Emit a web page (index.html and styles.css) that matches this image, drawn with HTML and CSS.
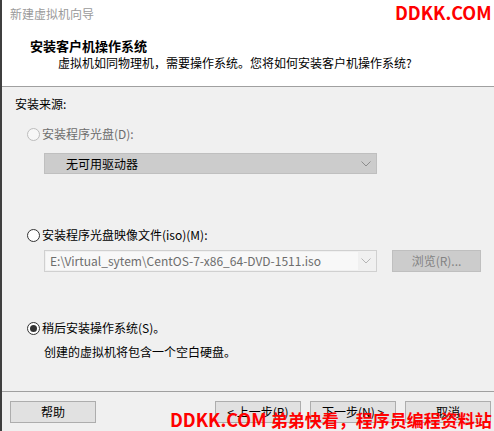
FILE: index.html
```html
<!DOCTYPE html>
<html lang="zh-CN">
<head>
<meta charset="utf-8">
<title>新建虚拟机向导</title>
<link rel="stylesheet" href="styles.css">
</head>
<body>
<div class="window">
  <header class="header">
    <div class="win-title">新建虚拟机向导</div>
    <div class="heading">安装客户机操作系统</div>
    <div class="subtitle">虚拟机如同物理机，需要操作系统。您将如何安装客户机操作系统?</div>
  </header>
  <main class="content">
    <div class="section-label">安装来源:</div>

    <label class="radio-row disabled r1"><span class="radio"></span><span>安装程序光盘(D):</span></label>
    <div class="select disabled-select">
      <span class="select-text">无可用驱动器</span>
      <svg class="chev" width="10" height="6" viewBox="0 0 10 6"><path d="M0.5 0.5 L5 5 L9.5 0.5" fill="none" stroke="#8c8c8c" stroke-width="1"/></svg>
    </div>

    <label class="radio-row r2"><span class="radio"></span><span>安装程序光盘映像文件(iso)(M):</span></label>
    <div class="iso-row">
      <div class="combo">
        <span class="combo-field">E:\Virtual_sytem\CentOS-7-x86_64-DVD-1511.iso</span>
        <svg class="chev" width="10" height="6" viewBox="0 0 10 6"><path d="M0.5 0.5 L5 5 L9.5 0.5" fill="none" stroke="#b4b4b4" stroke-width="1"/></svg>
      </div>
      <div class="browse">浏览(R)...</div>
    </div>

    <label class="radio-row r3"><span class="radio checked"></span><span>稍后安装操作系统(S)。</span></label>
    <div class="note">创建的虚拟机将包含一个空白硬盘。</div>
  </main>
  <footer class="footer">
    <div class="btn help">帮助</div>
    <div class="nav">
      <div class="btn">&lt; 上一步(B)</div>
      <div class="btn">下一步(N) &gt;</div>
      <div class="btn">取消</div>
    </div>
  </footer>
  <div class="wm-top">DDKK.COM</div>
  <div class="wm-bottom"><span class="wm-en">DDKK.COM</span> <span class="wm-cn">弟弟快看，程序员编程资料站</span></div>
</div>
</body>
</html>
```

FILE: styles.css
```css
* { box-sizing: border-box; }
html, body { margin: 0; padding: 0; }
body { background: #f0f0f0; }

.window {
  position: relative;
  width: 494px;
  height: 431px;
  overflow: hidden;
  display: flex;
  flex-direction: column;
  border-left: 2px solid #3f3f3f;
  background: #f0f0f0;
  font-family: "Noto Sans CJK SC", "Noto Sans", sans-serif;
  font-size: 12px;
  line-height: 16px;
  color: #000;
}

.header {
  height: 87px;
  background: #fff;
  border-bottom: 1px solid #a0a0a0;
  padding: 6px 0 0 8px;
}
.win-title { color: #9a9a9a; }
.heading {
  margin: 16px 0 0 20px;
  font-size: 13px;
  font-weight: bold;
}
.subtitle { margin: 1px 0 0 48px; }

.content {
  flex: 1;
  padding: 9px 0 0 13px;
  display: flex;
  flex-direction: column;
  align-items: flex-start;
}

.radio-row {
  display: flex;
  align-items: center;
  gap: 2px;
  margin-left: 12px;
  height: 16px;
}
.radio {
  width: 13px;
  height: 13px;
  border: 1px solid #333;
  border-radius: 50%;
  background: #fff;
  position: relative;
  flex: none;
}
.radio.checked::after {
  content: "";
  position: absolute;
  left: 2px; top: 2px;
  width: 7px; height: 7px;
  border-radius: 50%;
  background: #333;
}
.disabled { color: #6d6d6d; }
.disabled .radio { border-color: #bcbcbc; background: #f7f7f7; }

.r1 { margin-top: 14px; }
.r2 { margin-top: 53px; }
.r3 { margin-top: 48px; }

.select {
  margin: 11px 0 0 29px;
  width: 333px;
  height: 21px;
  display: flex;
  align-items: center;
  justify-content: space-between;
  padding: 0 5px 0 21px;
}
.disabled-select {
  background: #cccccc;
  border: 1px solid #bfbfbf;
}
.chev { flex: none; display: block; }

.iso-row {
  margin: 7px 0 0 29px;
  display: flex;
  gap: 15px;
}
.combo {
  width: 333px;
  height: 22px;
  border: 1px solid #d0d0d0;
  background: #f0f0f0;
  display: flex;
  align-items: center;
  padding: 1px 5px 1px 1px;
  justify-content: space-between;
}
.combo-field {
  width: 312px;
  height: 18px;
  background: #f8f8f8;
  color: #6d6d6d;
  padding-left: 4px;
  line-height: 18px;
  white-space: nowrap;
  overflow: hidden;
}
.browse {
  width: 89px;
  height: 22px;
  background: #cccccc;
  border: 1px solid #bfbfbf;
  color: #838383;
  display: flex;
  align-items: center;
  justify-content: center;
}

.note { margin: 8px 0 0 29px; }

.footer {
  height: 40px;
  border-top: 1px solid #a0a0a0;
  padding: 9px 3px 0 8px;
  display: flex;
  justify-content: space-between;
}
.nav { display: flex; gap: 9px; }
.btn {
  width: 86px;
  height: 22px;
  background: #e1e1e1;
  border: 1px solid #adadad;
  display: flex;
  align-items: center;
  justify-content: center;
}

.wm-top {
  position: absolute;
  top: 3px;
  left: 393px;
  color: #ff0000;
  font-weight: bold;
  font-size: 18px;
  line-height: 18px;
  white-space: nowrap;
}
.wm-bottom {
  position: absolute;
  top: 410px;
  left: 168px;
  color: #ff0000;
  font-weight: bold;
  font-size: 18px;
  line-height: 18px;
  white-space: nowrap;
}
.wm-cn { font-size: 17px; }
```
